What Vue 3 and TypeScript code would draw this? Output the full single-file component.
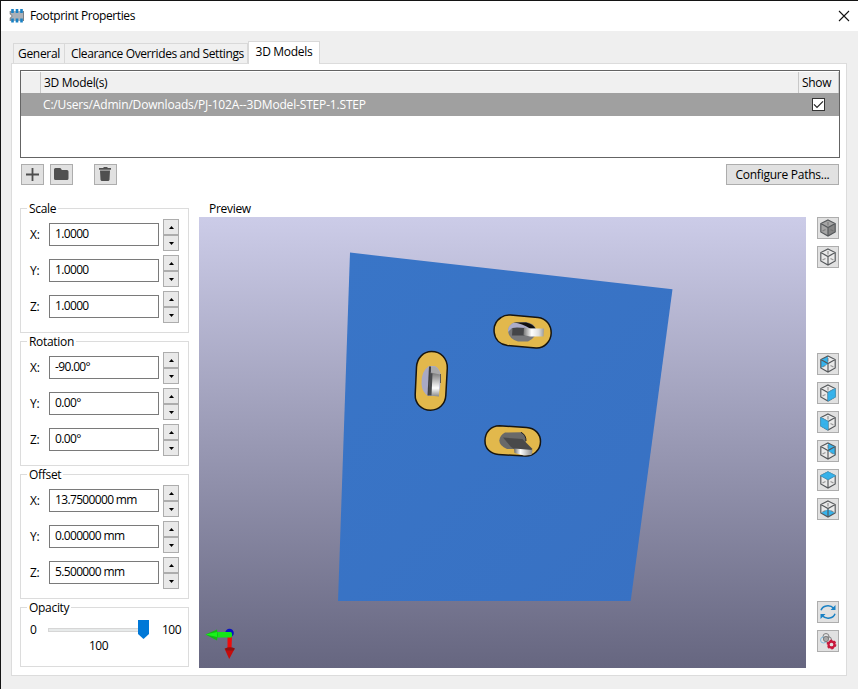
<script setup lang="ts">
import { reactive, ref } from 'vue'

interface Field { axis: string; value: string }
interface Group { title: string; fields: Field[] }
interface ViewButton { name: string; face?: string; fill?: string; spaced?: boolean }

const tabs = ['General', 'Clearance Overrides and Settings', '3D Models']
const activeTab = ref(2)
const shown = ref(true)

const groups = reactive<Group[]>([
  { title: 'Scale', fields: [{ axis: 'X:', value: '1.0000' }, { axis: 'Y:', value: '1.0000' }, { axis: 'Z:', value: '1.0000' }] },
  { title: 'Rotation', fields: [{ axis: 'X:', value: '-90.00°' }, { axis: 'Y:', value: '0.00°' }, { axis: 'Z:', value: '0.00°' }] },
  { title: 'Offset', fields: [{ axis: 'X:', value: '13.7500000 mm' }, { axis: 'Y:', value: '0.000000 mm' }, { axis: 'Z:', value: '5.500000 mm' }] },
])

const blue = '#36b3ec'
const views: ViewButton[] = [
  { name: 'solid', face: 'M10 2 17.2 5.5V14L10 18 2.8 14V5.5Z', fill: '#a5a5a5' },
  { name: 'wire' },
  { name: 'left', face: 'M2.8 5.5 10 2V10L2.8 14Z', fill: blue, spaced: true },
  { name: 'right', face: 'M10 9.4 17.2 5.7V14L10 18Z', fill: blue },
  { name: 'front', face: 'M2.8 5.7 10 9.4V18L2.8 14Z', fill: blue },
  { name: 'back', face: 'M10 2 17.2 5.5V14L10 10Z', fill: blue },
  { name: 'top', face: 'M10 1.8 17.4 5.7 10 9.6 2.6 5.7Z', fill: blue },
  { name: 'bottom', face: 'M10 10.3 17.2 14 10 18 2.8 14Z', fill: blue },
]
const isNear = (name: string) => ['right', 'front', 'top'].includes(name)
</script>

<template>
  <div class="window">
    <header class="titlebar">
      <svg class="logo" width="16" height="16" viewBox="0 0 16 16">
        <path d="M1 3H15V13H1V10A2 2 0 0 0 1 6Z" fill="#a9b0b8" />
        <path d="M1.2 3V6.2A1.8 1.8 0 0 1 1.2 9.8V13M14.5 3V13" fill="none" stroke="#7b8086" />
        <path d="M3.5 1V5M8 1V5M12.5 1V5M3.5 10.5V14.5M8 10.5V14.5M12.5 10.5V14.5" stroke="#1a81c4" stroke-width="2.6" />
      </svg>
      <span class="title">Footprint Properties</span>
      <svg class="close" width="12" height="12" viewBox="0 0 12 12"><path d="M1 1 11 11M11 1 1 11" stroke="#111" stroke-width="1.1" /></svg>
    </header>

    <nav class="tabs">
      <div v-for="(t, i) in tabs" :key="t" class="tab" :class="['tab' + i, { active: i === activeTab }]" @click="activeTab = i">{{ t }}</div>
    </nav>

    <main class="page">
      <div class="table">
        <div class="thead">
          <span class="cell rownum"></span>
          <span class="cell model">3D Model(s)</span>
          <span class="cell show">Show</span>
        </div>
        <div class="trow">
          <span class="path">C:/Users/Admin/Downloads/PJ-102A--3DModel-STEP-1.STEP</span>
          <span class="check" @click="shown = !shown">
            <svg v-if="shown" width="11" height="11" viewBox="0 0 11 11"><path d="M1 5.3 4 8.3 10 2.3" fill="none" stroke="#222" stroke-width="1.2" /></svg>
          </span>
        </div>
      </div>

      <div class="toolbar">
        <button class="tool"><svg width="21" height="19" viewBox="0 0 21 19"><path d="M10.5 3V16M4 9.5H17" stroke="#4e4e4e" stroke-width="1.8" /></svg></button>
        <button class="tool"><svg width="21" height="19" viewBox="0 0 21 19"><path d="M3 4.5Q3 3 4.5 3H9Q10 3 10.8 5H16Q17.5 5 17.5 6.5V13.5Q17.5 15 16 15H4.5Q3 15 3 13.5Z" fill="#505050" /></svg></button>
        <button class="tool trash"><svg width="21" height="19" viewBox="0 0 21 19"><path d="M4 3H8L9 2H12L13 3H16V4.700H4ZM5 5.500H15L14.500 14.800Q14.300 16 13 16H7Q5.700 16 5.500 14.800Z" fill="#505050" /></svg></button>
        <button class="configure">Configure Paths...</button>
      </div>

      <div class="body">
        <aside class="side">
          <section v-for="g in groups" :key="g.title" class="group">
            <span class="legend">{{ g.title }}</span>
            <div v-for="f in g.fields" :key="f.axis" class="field">
              <label>{{ f.axis }}</label>
              <div class="input">{{ f.value }}</div>
              <div class="spin">
                <span><svg width="5" height="3" viewBox="0 0 5 3"><path d="M0 3 2.5 0 5 3Z" /></svg></span>
                <span><svg width="5" height="3" viewBox="0 0 5 3"><path d="M0 0 2.5 3 5 0Z" /></svg></span>
              </div>
            </div>
          </section>
          <section class="group opacity">
            <span class="legend">Opacity</span>
            <div class="slider">
              <span class="min">0</span>
              <div class="track"><svg class="thumb" width="11" height="19" viewBox="0 0 11 19"><path d="M0 0H11V14L5.5 19 0 14Z" fill="#0078d7" /></svg></div>
              <span>100</span>
            </div>
            <div class="current">100</div>
          </section>
        </aside>

        <section class="preview">
          <h2>Preview</h2>
          <svg class="scene" width="607" height="451" viewBox="199 217 607 451">
            <defs>
              <linearGradient id="sky" x1="0" y1="0" x2="0" y2="1"><stop offset="0" stop-color="#cccce8" /><stop offset="1" stop-color="#666680" /></linearGradient>
              <linearGradient id="board" x1="0" y1="0" x2="1" y2="1"><stop offset="0" stop-color="#3975c7" /><stop offset="1" stop-color="#3871c3" /></linearGradient>
              <linearGradient id="pinH" x1="0" x2="1" y1="0" y2="0"><stop offset="0" stop-color="#777" /><stop offset=".4" stop-color="#fff" /><stop offset=".75" stop-color="#ddd" /><stop offset="1" stop-color="#999" /></linearGradient>
              <linearGradient id="pinV" x1="0" x2="0" y1="0" y2="1"><stop offset="0" stop-color="#777" /><stop offset=".25" stop-color="#aaa" /><stop offset=".65" stop-color="#fff" /><stop offset="1" stop-color="#888" /></linearGradient>
              <linearGradient id="tip" x1="0" x2="1" y1="0" y2="0"><stop offset="0" stop-color="#666" /><stop offset=".35" stop-color="#fff" /><stop offset="1" stop-color="#888" /></linearGradient>
            </defs>
            <rect x="199" y="217" width="607" height="451" fill="url(#sky)" />
            <path d="M350 252.6 672.5 289.3 630.7 601H338Z" fill="url(#board)" />

            <g stroke="#18150f" stroke-width="1.5" fill="#e2b84c">
              <path d="M510.5 315Q505 314.5 501 317.5C495.500 321 493.500 326.500 494.200 332.500C495 340 500.500 344.500 507.500 345.500L536 348C544 348.500 551 341.500 551.200 333C551.200 324.500 546 318.500 538 317.500Z" />
              <path d="M416.500 367C417 358 423.500 351.500 431.500 351.500C441 351.500 447.500 358.500 447.300 368L445.800 395.500C445.300 404 439 410.200 430.500 410.200C421.500 410.200 414.800 403.500 415.200 394.500Z" />
              <path d="M499.500 425.800 526.500 427.500C535 428 540.500 434 540.500 441.500C540.500 450 533.500 456.200 525.500 456L498.500 454.500C490.500 454 484.800 448.500 485 440.500C485.200 432 491 426 499.500 425.800Z" />
            </g>

            <path d="M514 322.500 526 322Q534 323 536.500 330 537 337 528 341.500H518Q509 339 508 331 508.500 325 514 322.500Z" fill="#77787b" />
            <path d="M513 323H524L532 328H512L508 332Q507.500 326 513 323Z" fill="#acacc8" />
            <path d="M514 322.500H526Q533 324 535.500 328.500H530Q522 323.500 514 322.500Z" fill="#11100f" />
            <path d="M512.500 328 517 327.500 525.500 328 524.500 335.500H512Z" fill="#444548" />
            <path d="M524 327.500 531 328.500H544L543.500 336.500 530 336.500 523.500 335Z" fill="url(#pinH)" />

            <path d="M429 366H435Q440.500 369 441 377L440 388 438 396H428Q422 392 421.500 384 421 371 429 366Z" fill="#a9a9c4" />
            <path d="M429 366.500H431L430.500 395.500H427.500Z" fill="#3e3f42" />
            <path d="M431 367H435Q439 369 440 374L439.500 377 431.500 375.500Z" fill="#aaa" />
            <path d="M430.500 372.500 440 374.500 439 396.500 429 395.500Z" fill="url(#pinV)" />
            <path d="M430 373 432.500 373.500 431.500 395.500 428.500 395Z" fill="#484a4d" />
            <path d="M440.500 374V383" stroke="#333" stroke-width=".7" />

            <path d="M505 432.500 521 432.300Q526 434 526 441L523 449H507Q499.500 446 499.300 440.500 500 435 505 432.500Z" fill="#696969" />
            <path d="M521 432.300Q526.200 435 526 441" fill="none" stroke="#222" />
            <path d="M503 437.500 522.500 439 532.500 449 531 450.500 515 449.500 511 447Z" fill="#49494a" />
            <path d="M514 448.500 532.500 450 531.500 455 524 455.500 514.500 453Z" fill="url(#tip)" />

            <g>
              <circle cx="229.500" cy="633" r="4.300" fill="#0710c4" />
              <path d="M227.500 636H232L231.500 649H227.500Z" fill="#f00b0b" />
              <path d="M224.500 648.500 234.500 649 229.200 659Z" fill="#c50c0c" />
              <path d="M225 648.500Q230 646 235 648.500L233.500 650.500H226Z" fill="#8e1212" />
              <path d="M216.500 632H231Q233 634 231.500 637.500H216.500Z" fill="#15e618" />
              <path d="M205.500 634.500 217 629.500Q218.500 635 217 640.500Z" fill="#14b914" />
              <path d="M205.500 634.500 217 632V637Z" fill="#18f31a" />
            </g>
          </svg>
        </section>

        <aside class="views">
          <button v-for="v in views" :key="v.name" class="view" :class="{ spaced: v.spaced }">
            <svg width="20" height="20" viewBox="0 0 20 20">
              <path v-if="v.name !== 'solid'" d="M10 2 17.200 5.500V14L10 18 2.800 14V5.500Z" fill="#e9e9e9" />
              <path v-if="v.face" :d="v.face" :fill="v.fill" />
              <path v-if="v.name === 'solid'" d="M10 9.500 17.200 5.700V14L10 18Z" fill="#858585" />
              <path d="M10 4V7.500M4.500 13 7.500 11.500M12.500 11.500 15.500 13" stroke="#666" stroke-width="1.300" opacity=".6" />
              <path d="M10 2 17.200 5.600V14L10 18 2.800 14V5.600ZM2.800 5.600 10 9.500 17.200 5.600M10 9.500V18" fill="none" stroke="#55585b" stroke-width="1.150" />
              <path v-if="isNear(v.name)" :d="v.face" :fill="v.fill" :stroke="v.fill" stroke-width=".8" opacity=".9" />
            </svg>
          </button>
          <button class="view refresh">
            <svg width="20" height="20" viewBox="0 0 20 20"><path d="M3 8.200C4.500 3.800 11.500 1.800 16 6.500M17 11.800C15.500 16.200 8.500 18.200 4 13.500" fill="none" stroke="#1a81c4" stroke-width="1.500" /><path d="M17.500 3V8H12.500ZM2.500 17V12H7.500Z" fill="#1a81c4" /></svg>
          </button>
          <button class="view">
            <svg width="20" height="20" viewBox="0 0 20 20">
              <g fill="none" stroke-width=".9"><circle cx="8" cy="5.500" r="3" stroke="#777" /><circle cx="5.500" cy="9" r="3" stroke="#76b8dc" /><circle cx="10.500" cy="8.800" r="3" stroke="#777" /><circle cx="8" cy="8" r="2.600" stroke="#777" fill="#aaa" /></g>
              <circle cx="13.500" cy="13.500" r="3" fill="none" stroke="#c8193c" stroke-width="2.300" />
              <circle cx="13.500" cy="13.500" r="4.200" fill="none" stroke="#c8193c" stroke-width="1.400" stroke-dasharray="2.200 2.198" />
            </svg>
          </button>
        </aside>
      </div>
    </main>
  </div>
</template>

<style>
body { margin: 0; overflow: hidden; }
</style>

<style scoped>
* { box-sizing: border-box; }
.window { width: 858px; height: 689px; background: #efefef; border: solid #141414; border-width: 1px 0 0 1px; font: 12px/16px "Open Sans", "Noto Sans", sans-serif; letter-spacing: -.3px; color: #000; display: flex; flex-direction: column; white-space: nowrap; }
button { font: inherit; letter-spacing: inherit; color: inherit; padding: 0; margin: 0; border: 1px solid #adadad; background: #e1e1e1; display: flex; align-items: center; justify-content: center; }
svg { display: block; }
.titlebar { height: 30px; flex: none; background: #fff; display: flex; align-items: center; padding: 0 8px; }
.title { margin-left: 5px; letter-spacing: -.4px; }
.close { margin-left: auto; }
.tabs { display: flex; align-items: flex-end; height: 32px; flex: none; padding-left: 12px; z-index: 1; }
.tab { height: 20px; border: 1px solid #d9d9d9; border-left-width: 0; border-bottom: 0; background: #f0f0f0; padding-top: 2px; text-align: center; }
.tab0 { width: 52px; border-left-width: 1px; }
.tab1 { width: 183px; letter-spacing: -.39px; padding-left: 3px; }
.tab2 { width: 72px; }
.tab.active { height: 23px; background: #fff; border-left-width: 1px; margin-bottom: -1px; }
.page { margin-left: 10px; width: 836px; height: 613px; flex: none; background: #fff; border: 1px solid #dcdcdc; padding: 6px 0 0 8px; }
.table { width: 820px; height: 88px; border: 1px solid #646464; }
.thead { height: 22px; display: flex; background: #f0f0f0; border-top: 1px solid #fff; }
.cell { border-right: 1px solid #c8c8c8; padding: 3px 0 0 3px; }
.rownum { width: 20px; }
.model { width: 758px; }
.show { flex: 1; padding-left: 3px; }
.trow { height: 23px; background: #a0a0a0; color: #fff; display: flex; align-items: center; justify-content: space-between; padding: 0 14px 0 22px; }
.path { letter-spacing: -.17px; }
.check { width: 13px; height: 13px; background: #fff; border: 1px solid #333; }
.toolbar { display: flex; margin: 6px 0 0 1px; height: 21px; width: 818px; }
.tool { width: 23px; height: 21px; margin-right: 6px; }
.trash { margin-left: 15px; }
.configure { width: 113px; margin-left: auto; letter-spacing: -.25px; }
.body { display: flex; margin-top: 16px; height: 467px; }
.side { width: 169px; padding-top: 7px; }
.group { position: relative; height: 125px; border: 1px solid #dcdcdc; margin-bottom: 8px; padding: 10px 9px 0 9px; }
.legend { position: absolute; top: -8px; left: 6px; padding: 0 2px; background: #fff; }
.field { height: 32px; display: flex; align-items: center; margin-bottom: 4px; }
.field label { width: 19px; }
.input { width: 110px; height: 23px; border: 1px solid #7a7a7a; padding: 2px 0 0 5px; margin-top: -1px; letter-spacing: -.65px; }
.spin { width: 16px; height: 32px; margin-left: 4px; display: flex; flex-direction: column; }
.spin span { flex: 1; border: 1px solid #adadad; background: #e9e9e9; display: flex; align-items: center; justify-content: center; }
.opacity { height: 60px; padding: 12px 0 0 9px; }
.slider { display: flex; height: 19px; align-items: center; letter-spacing: -.5px; }
.min { width: 18px; flex: none; }
.track { width: 101px; flex: none; height: 4px; border: 1px solid #d6d6d6; background: #e7eaea; margin-right: 13px; position: relative; }
.thumb { position: absolute; right: -1px; top: -9px; }
.current { margin: -1px 0 0 59px; letter-spacing: -.5px; }
.preview { width: 607px; margin-left: 10px; }
h2 { font: inherit; height: 16px; margin: 0 0 0 10px; }
.views { margin: 16px 0 0 11px; }
.view { width: 22px; height: 22px; margin-bottom: 7px; }
.spaced { margin-top: 85px; }
.refresh { margin-top: 81px; }
</style>
